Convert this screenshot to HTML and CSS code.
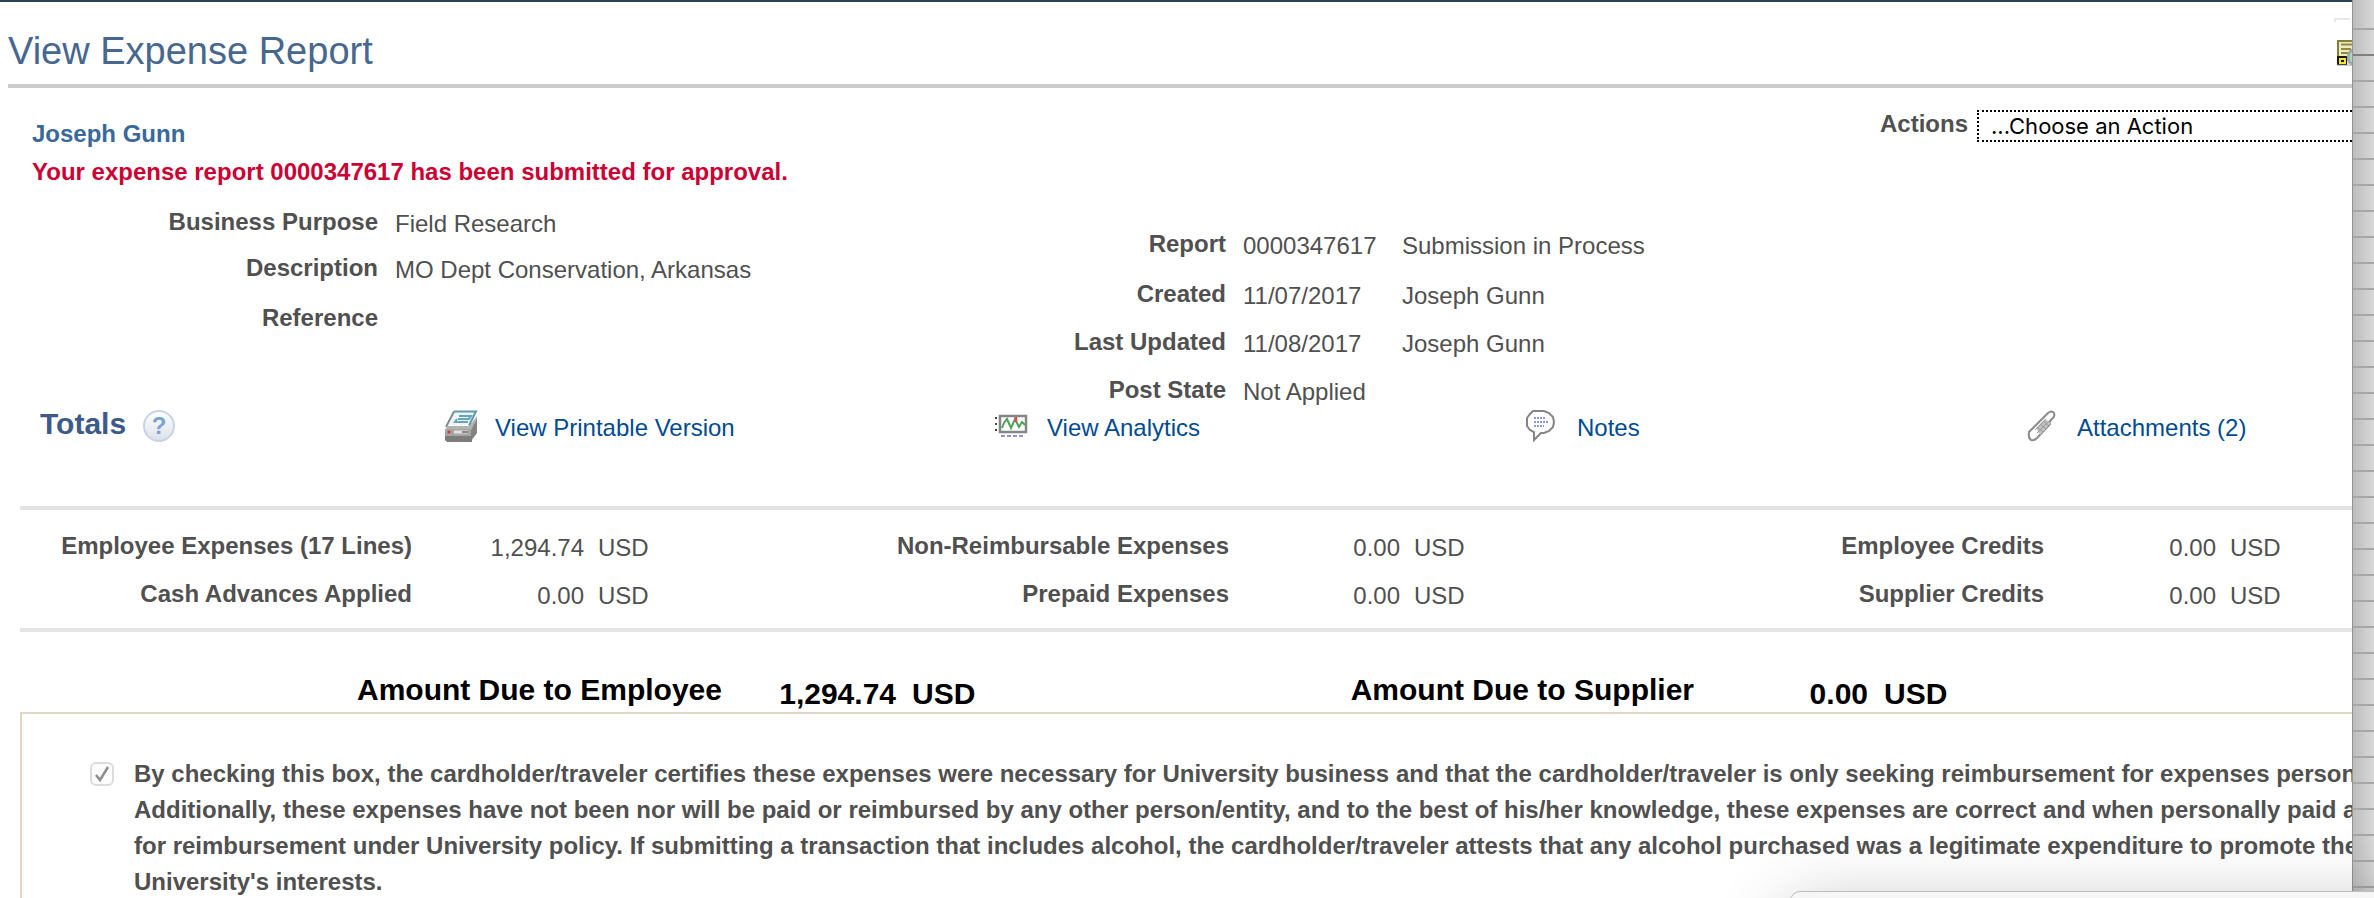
FILE: index.html
```
<!DOCTYPE html>
<html lang="en">
<head>
<meta charset="utf-8">
<title>View Expense Report</title>
<link rel="stylesheet" href="styles.css">
</head>
<body>
<main class="sheet">
  <header class="sheet-head">
    <h1 class="title">View Expense Report</h1>
    <div class="head-tools">
      <span class="tool-edge"></span>
      <svg class="inspect" width="26" height="26" viewBox="0 0 26 26" aria-hidden="true">
        <rect width="26" height="26" fill="#84803c"/>
        <rect x="2" y="2" width="24" height="15" fill="#eeebbd"/>
        <path d="M4 4.500h22M4 9h10M4 13h8" stroke="#8f8a48" stroke-width="1.800"/>
        <rect y="16" width="10" height="9" fill="#1c1a10"/>
        <rect x="10" y="16" width="16" height="9" fill="#dcdcd0"/>
        <rect x="3" y="19" width="5" height="4" fill="none" stroke="#f2e63a" stroke-width="2"/>
        <path d="M0 25.500h26" stroke="#ccc" stroke-width="1.500"/>
        <circle cx="19" cy="17" r="8" fill="#a8d8b4" stroke="#a0a3a8" stroke-width="2.500"/>
      </svg>
    </div>
  </header>

  <section class="intro">
    <div class="owner">
      <h2 class="name">Joseph Gunn</h2>
      <p class="message">Your expense report 0000347617 has been submitted for approval.</p>
    </div>
    <div class="actions">
      <label for="action">Actions</label>
      <select id="action" class="action-list"><option>...Choose an Action</option></select>
    </div>
  </section>

  <section class="details">
    <dl class="facts purpose">
      <dt>Business Purpose</dt><dd>Field Research</dd>
      <dt>Description</dt><dd>MO Dept Conservation, Arkansas</dd>
      <dt>Reference</dt><dd></dd>
    </dl>
    <dl class="facts status">
      <dt>Report</dt><dd>0000347617</dd><dd>Submission in Process</dd>
      <dt>Created</dt><dd>11/07/2017</dd><dd>Joseph Gunn</dd>
      <dt>Last Updated</dt><dd>11/08/2017</dd><dd>Joseph Gunn</dd>
      <dt>Post State</dt><dd>Not Applied</dd><dd></dd>
    </dl>
  </section>

  <nav class="links">
    <div class="totals"><h2 class="totals-title">Totals</h2><button class="help" type="button" aria-label="Help">?</button></div>
    <a class="link" href="#print">
      <svg width="34" height="32" viewBox="0 0 34 32" aria-hidden="true">
        <path d="M7 13l-5 7h26l6-8V6l-8 10H5z" fill="#b3b3b1"/>
        <path d="M28 20l6-11v14l-6 8z" fill="#83837f"/>
        <rect x="2" y="19" width="26" height="9" rx="1" fill="#a5a5a3"/>
        <path d="M2 26h27v6H4l-2-2z" fill="#7c7c7a"/>
        <circle cx="6" cy="22" r="1.500" fill="#d33"/>
        <path d="M11 22h14" stroke="#e2e2e2" stroke-width="3"/><path d="M19 22h6" stroke="#888" stroke-width="2"/>
        <path d="M12 2h20l-5 13H6z" fill="#edf5f3"/>
        <path d="M16 6h12l-2 3H15M14 9l-2 3h13" fill="none" stroke="#67a4bd" stroke-width="2"/>
        <path d="M11 1.500h22l-7 14" fill="none" stroke="#5f9ab0" stroke-width="2"/>
        <path d="M11 1.500L3 17" stroke="#7d8e91" stroke-width="2"/>
      </svg>View Printable Version</a>
    <a class="link" href="#analytics">
      <svg width="34" height="32" viewBox="0 0 34 32" aria-hidden="true">
        <rect x="5" y="6" width="26" height="16" fill="#fff" stroke="#858585" stroke-width="2.500"/>
        <path d="M7 18l2-5 3-4 4 9 4-9 4 8 3-5 3 3" fill="none" stroke="#4aa356" stroke-width="2"/>
        <path d="M21 7v5" stroke="#e04c4c" stroke-width="2.500"/>
        <path d="M0 8h2M0 14h2M0 20h2" stroke="#444" stroke-width="2"/>
        <path d="M6 26h24" stroke="#8796d8" stroke-width="2" stroke-dasharray="4 2"/>
      </svg>View Analytics</a>
    <a class="link" href="#notes">
      <svg width="34" height="32" viewBox="0 0 34 32" aria-hidden="true">
        <path d="M8 1h11l5 2 4 4 1 5-1 5-4 4-5 2h-3l-7 7V22l-4-2-3-4V8l3-4z" fill="#fff" stroke="#858585" stroke-width="2"/>
        <path d="M9 8h11M9 12h15M9 16h10" stroke="#8d98dc" stroke-width="2" stroke-dasharray="2 1"/>
      </svg>Notes</a>
    <a class="link" href="#attachments">
      <svg width="34" height="32" viewBox="0 0 34 32" aria-hidden="true">
        <path d="M4 22L23 3q4-3 6 0 1 3-1 5l-3 3v3L12 28q-3 3-6 2-3-2-2-8z" fill="#fff" stroke="#8b8b8b" stroke-width="2"/>
        <path d="M11 18l9-9 6 4-11 12z" fill="#c2c2c2"/>
        <path d="M12 17l6 5M15 14l6 5M18 11l6 5M12 23L24 11M10 20L21 9" stroke="#979797" stroke-width="1"/>
      </svg>Attachments (2)</a>
  </nav>

  <section class="sums">
    <span class="lbl">Employee Expenses (17 Lines)</span><span class="num">1,294.74</span><span class="unit">USD</span>
    <span class="lbl">Non-Reimbursable Expenses</span><span class="num">0.00</span><span class="unit">USD</span>
    <span class="lbl">Employee Credits</span><span class="num">0.00</span><span class="unit">USD</span>
    <span class="lbl">Cash Advances Applied</span><span class="num">0.00</span><span class="unit">USD</span>
    <span class="lbl">Prepaid Expenses</span><span class="num">0.00</span><span class="unit">USD</span>
    <span class="lbl">Supplier Credits</span><span class="num">0.00</span><span class="unit">USD</span>
  </section>

  <section class="due">
    <span class="lbl">Amount Due to Employee</span><span class="num">1,294.74</span><span class="unit">USD</span>
    <span class="lbl">Amount Due to Supplier</span><span class="num">0.00</span><span class="unit">USD</span>
  </section>

  <section class="certify">
    <span class="tick-wrap">
      <input class="tick" id="certify" type="checkbox" checked disabled>
      <svg class="tick-mark" width="24" height="24" viewBox="0 0 24 24" aria-hidden="true"><path d="M6 13l4 5 8-13" fill="none" stroke="#8e8e8e" stroke-width="2.500"/></svg>
    </span>
    <label class="pledge" for="certify">By checking this box, the cardholder/traveler certifies these expenses were necessary for University business and that the cardholder/traveler is only seeking reimbursement for expenses personally<br>Additionally, these expenses have not been nor will be paid or reimbursed by any other person/entity, and to the best of his/her knowledge, these expenses are correct and when personally paid are<br>for reimbursement under University policy. If submitting a transaction that includes alcohol, the cardholder/traveler attests that any alcohol purchased was a legitimate expenditure to promote the<br>University's interests.</label>
  </section>
</main>
<aside class="backdrop"></aside>
<div class="popup"></div>
</body>
</html>
```
FILE: styles.css
```
* { box-sizing: border-box; }

body {
  margin: 0;
  height: 100vh;
  display: flex;
  position: relative;
  overflow: hidden;
  background: #fff;
  color: #505050;
  font: 24px/36px "Liberation Sans", Arial, sans-serif;
}

h1, h2, p, dl, dd { margin: 0; }

.sheet {
  flex: 1;
  min-width: 0;
  overflow: hidden;
  border-top: 2px solid #2e3f5c;
}

.sheet-head {
  display: flex;
  justify-content: space-between;
  margin-left: 8px;
  height: 86px;
  border-bottom: 4px solid #ccc;
}
.title {
  padding-top: 27px;
  font-size: 38px;
  line-height: 44px;
  font-weight: 400;
  color: #46678f;
}
.head-tools {
  width: 18px;
  padding-top: 16px;
  display: flex;
  flex-direction: column;
  gap: 18px;
}
.tool-edge {
  width: 16px;
  height: 4px;
  border-top: 2px solid #e8e8e8;
  border-left: 2px solid #e8e8e8;
}
.inspect { margin-left: 3px; flex: none; }

.intro {
  display: flex;
  justify-content: space-between;
  padding: 22px 0 0 32px;
}
.owner { padding-top: 6px; }
.name { font-size: 24px; line-height: 36px; color: #38689c; }
.message { padding-top: 2px; font-weight: 700; color: #cc0033; }
.actions {
  display: flex;
  align-items: flex-start;
  gap: 9px;
  margin-right: -60px;
  font-weight: 700;
}
.actions label { margin-top: -4px; }
.action-list {
  width: 435px;
  height: 32px;
  padding: 0 12px;
  appearance: none;
  border: 2px dotted #000;
  border-radius: 0;
  background: #fff;
  color: #000;
  font: 22px/28px Inter, "Noto Sans", sans-serif;
}

.details {
  display: grid;
  grid-template-columns: 1050fr 1302fr;
  padding-top: 14px;
}
.facts {
  display: grid;
  column-gap: 17px;
  align-content: start;
}
.facts dt { font-weight: 700; text-align: right; }
.facts dd { padding-top: 2px; }
.purpose {
  grid-template-columns: 378fr 655fr;
  grid-template-rows: 46px 50px 48px;
}
.status {
  grid-template-columns: 176fr 142fr 950fr;
  grid-template-rows: 50px 48px 48px 38px;
  padding-top: 22px;
}

.links {
  display: grid;
  grid-template-columns: 403fr 552fr 530fr 500fr 327fr;
  padding: 0 0 0 40px;
  height: 96px;
  align-items: start;
}
.totals { display: flex; align-items: flex-start; gap: 17px; }
.totals-title { font-size: 30px; line-height: 28px; color: #3c5a8a; }
.help {
  width: 32px;
  height: 32px;
  padding: 0;
  border: 2px solid #c5d3ea;
  border-radius: 50%;
  background: linear-gradient(#fff, #dde1e8);
  color: #78a5d4;
  font: 700 24px/28px "Liberation Sans", Arial, sans-serif;
}
.link {
  display: flex;
  gap: 18px;
  color: #004b91;
  text-decoration: none;
}
.link svg { flex: none; overflow: visible; }

.sums {
  display: grid;
  grid-template-columns: 392fr 172fr 80fr 565fr 171fr 80fr 564fr 172fr 136fr;
  grid-auto-rows: 48px;
  margin-left: 20px;
  padding: 18px 0 4px;
  border-top: 4px solid #e4e4e4;
  border-bottom: 4px solid #e4e4e4;
}
.lbl { font-weight: 700; text-align: right; white-space: nowrap; }
.num { padding-top: 2px; text-align: right; }
.unit { padding: 2px 0 0 14px; }

.due {
  display: grid;
  grid-template-columns: 702fr 174fr 100fr 698fr 174fr 484fr;
  margin-left: 20px;
  padding-top: 40px;
  color: #000;
  font-size: 30px;
  font-weight: 700;
}
.due .num { padding-top: 4px; }
.due .unit { padding: 4px 0 0 16px; }

.certify {
  display: flex;
  align-items: flex-start;
  gap: 20px;
  margin-left: 20px;
  padding: 42px 0 20px 68px;
  border-top: 2px solid #e0d8c0;
  border-left: 2px solid #e0d8c0;
}
.tick-wrap { position: relative; flex: none; width: 24px; height: 24px; margin-top: 6px; }
.tick {
  appearance: none;
  display: block;
  width: 24px;
  height: 24px;
  margin: 0;
  border: 2px solid #dcdcdc;
  border-radius: 6px;
  background: #fcfcfc;
}
.tick-mark { position: absolute; inset: 0; }
.pledge { font-weight: 700; white-space: nowrap; }

.backdrop {
  flex: none;
  width: 22px;
  padding-top: 28px;
  border-left: 1px solid #929292;
  background:
    linear-gradient(#808080, #808080) 0 26px / 100% 2px no-repeat content-box,
    linear-gradient(#a6a6a6 2px, transparent 2px) 0 0 / 100% 26px content-box,
    linear-gradient(90deg, #bdbdbd, #d8d8d8);
}

.popup {
  position: absolute;
  left: 75.4%;
  right: -80px;
  bottom: -240px;
  height: 247px;
  border: 1px solid #bdbdbd;
  border-radius: 10px;
  background: #f6f6f6;
  box-shadow: 0 20px 72px rgba(0, 0, 0, 0.3);
}
```
